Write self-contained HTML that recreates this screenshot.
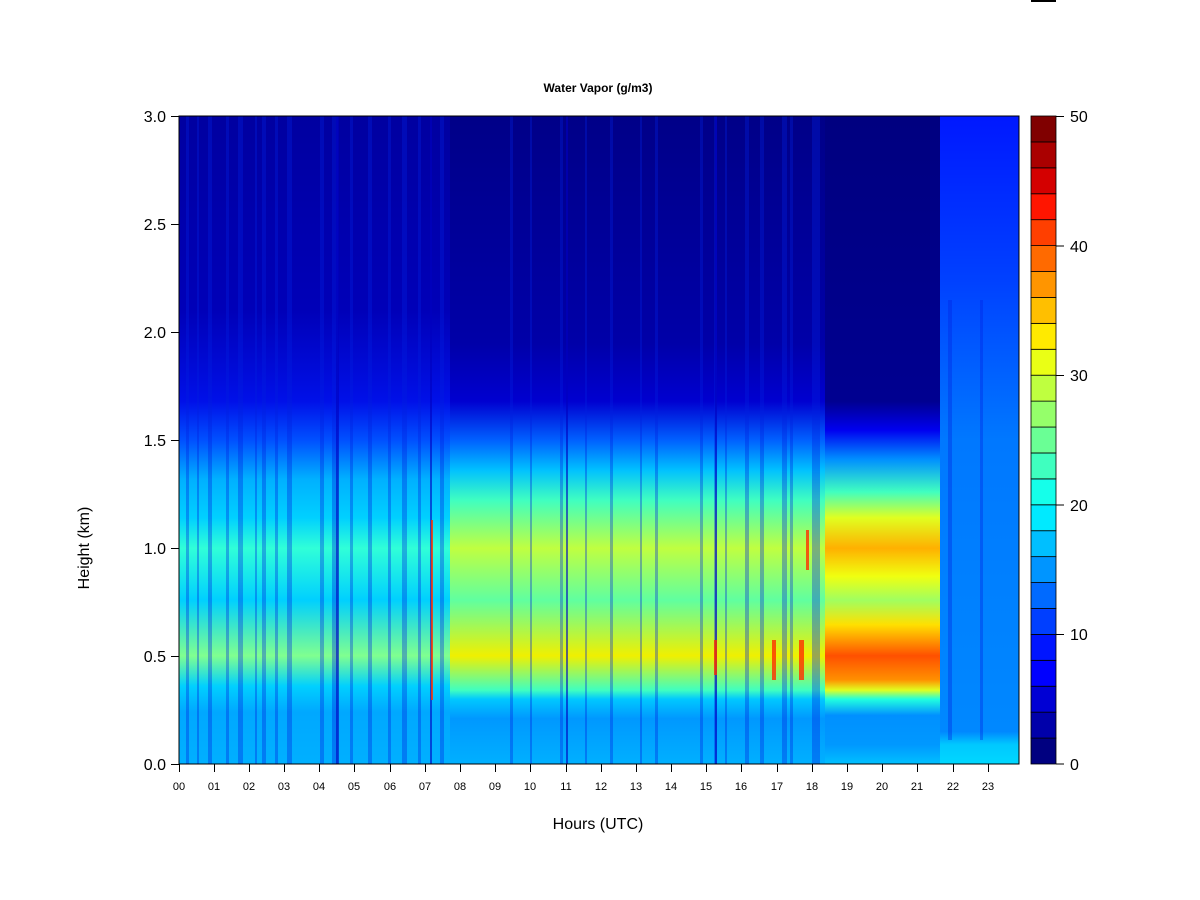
<!DOCTYPE html>
<html><head><meta charset="utf-8"><style>
html,body{margin:0;padding:0;background:#fff;}
svg{display:block;font-family:"Liberation Sans",Arial,sans-serif;}
</style></head><body>
<svg width="1200" height="900" viewBox="0 0 1200 900" xmlns="http://www.w3.org/2000/svg">
<defs>
<linearGradient id="gA" x1="0" y1="116" x2="0" y2="764" gradientUnits="userSpaceOnUse">
<stop offset="0" stop-color="#0000a0"/>
<stop offset="0.3" stop-color="#0000b8"/>
<stop offset="0.44" stop-color="#0010e8"/>
<stop offset="0.5" stop-color="#0050ff"/>
<stop offset="0.56" stop-color="#00b0ff"/>
<stop offset="0.62" stop-color="#00d0ff"/>
<stop offset="0.667" stop-color="#30ffd8"/>
<stop offset="0.747" stop-color="#00d0ff"/>
<stop offset="0.833" stop-color="#80ff90"/>
<stop offset="0.88" stop-color="#00d0ff"/>
<stop offset="0.92" stop-color="#00a8ff"/>
<stop offset="1" stop-color="#00b0ff"/>
</linearGradient>
<linearGradient id="gB" x1="0" y1="116" x2="0" y2="764" gradientUnits="userSpaceOnUse">
<stop offset="0" stop-color="#000088"/>
<stop offset="0.35" stop-color="#0000a8"/>
<stop offset="0.44" stop-color="#0000d0"/>
<stop offset="0.5" stop-color="#0060ff"/>
<stop offset="0.546" stop-color="#00c0ff"/>
<stop offset="0.593" stop-color="#40ffc0"/>
<stop offset="0.667" stop-color="#c0ff40"/>
<stop offset="0.747" stop-color="#60ffa0"/>
<stop offset="0.833" stop-color="#f0f000"/>
<stop offset="0.886" stop-color="#40ffc0"/>
<stop offset="0.9" stop-color="#00c8ff"/>
<stop offset="0.93" stop-color="#0098ff"/>
<stop offset="1" stop-color="#00b0ff"/>
</linearGradient>
<linearGradient id="gC" x1="0" y1="116" x2="0" y2="764" gradientUnits="userSpaceOnUse">
<stop offset="0" stop-color="#000080"/>
<stop offset="0.44" stop-color="#000090"/>
<stop offset="0.485" stop-color="#0000f0"/>
<stop offset="0.53" stop-color="#0090ff"/>
<stop offset="0.58" stop-color="#40ffc0"/>
<stop offset="0.62" stop-color="#e0ff20"/>
<stop offset="0.667" stop-color="#ffb000"/>
<stop offset="0.71" stop-color="#f0ff10"/>
<stop offset="0.747" stop-color="#a0ff60"/>
<stop offset="0.785" stop-color="#ffe000"/>
<stop offset="0.833" stop-color="#ff5000"/>
<stop offset="0.87" stop-color="#ff9000"/>
<stop offset="0.886" stop-color="#e0ff20"/>
<stop offset="0.9" stop-color="#20ffe0"/>
<stop offset="0.925" stop-color="#0090ff"/>
<stop offset="0.97" stop-color="#0098ff"/>
<stop offset="1" stop-color="#00c0ff"/>
</linearGradient>
<linearGradient id="gD" x1="0" y1="116" x2="0" y2="764" gradientUnits="userSpaceOnUse">
<stop offset="0" stop-color="#0018ff"/>
<stop offset="0.25" stop-color="#0040ff"/>
<stop offset="0.5" stop-color="#0078ff"/>
<stop offset="0.95" stop-color="#0088ff"/>
<stop offset="0.97" stop-color="#00c8ff"/>
<stop offset="1" stop-color="#00d8ff"/>
</linearGradient>
</defs>
<rect x="1031" y="0" width="25" height="2" fill="#000"/>
<text x="598" y="92" font-size="12" font-weight="bold" text-anchor="middle">Water Vapor (g/m3)</text>
<rect x="179" y="116" width="272" height="648" fill="url(#gA)"/>
<rect x="450" y="116" width="376" height="648" fill="url(#gB)"/>
<rect x="825" y="116" width="116" height="648" fill="url(#gC)"/>
<rect x="940" y="116" width="79" height="648" fill="url(#gD)"/>
<g fill="#0020e0" opacity="0.35">
<rect x="186" y="116" width="3" height="648"/><rect x="197" y="116" width="2" height="648"/>
<rect x="208" y="116" width="4" height="648"/><rect x="226" y="116" width="3" height="648"/>
<rect x="238" y="116" width="5" height="648"/><rect x="255" y="116" width="2" height="648"/>
<rect x="262" y="116" width="4" height="648"/><rect x="275" y="116" width="3" height="648"/>
<rect x="287" y="116" width="5" height="648"/><rect x="320" y="116" width="4" height="648"/>
<rect x="332" y="116" width="6" height="648"/><rect x="350" y="116" width="3" height="648"/>
<rect x="368" y="116" width="4" height="648"/><rect x="388" y="116" width="3" height="648"/>
<rect x="402" y="116" width="5" height="648"/><rect x="418" y="116" width="3" height="648"/>
<rect x="440" y="116" width="4" height="648"/><rect x="510" y="116" width="3" height="648"/>
<rect x="530" y="116" width="2" height="648"/><rect x="560" y="116" width="3" height="648"/>
<rect x="585" y="116" width="2" height="648"/><rect x="610" y="116" width="3" height="648"/>
<rect x="640" y="116" width="2" height="648"/><rect x="655" y="116" width="3" height="648"/>
<rect x="700" y="116" width="3" height="648"/><rect x="714" y="116" width="3" height="648"/>
<rect x="725" y="116" width="2" height="648"/><rect x="745" y="116" width="4" height="648"/>
<rect x="760" y="116" width="4" height="648"/><rect x="782" y="116" width="5" height="648"/>
<rect x="790" y="116" width="3" height="648"/><rect x="812" y="116" width="8" height="648"/>
<rect x="948" y="300" width="4" height="440"/><rect x="980" y="300" width="3" height="440"/>
</g>
<g fill="#0000c0" opacity="0.6">
<rect x="336" y="116" width="3" height="648"/><rect x="430" y="116" width="2" height="648"/>
<rect x="715" y="116" width="2" height="648"/><rect x="566" y="116" width="2" height="648"/>
</g>
<g fill="#ff3000" opacity="0.8">
<rect x="431" y="520" width="2" height="180"/>
<rect x="772" y="640" width="4" height="40"/><rect x="799" y="640" width="5" height="40"/>
<rect x="806" y="530" width="3" height="40"/><rect x="714" y="640" width="3" height="35"/>
</g>
<rect x="179" y="116" width="840" height="648" fill="none" stroke="#000" stroke-width="1"/>
<g stroke="#000" stroke-width="1">
<line x1="171" y1="116.5" x2="179" y2="116.5"/><line x1="171" y1="224.5" x2="179" y2="224.5"/>
<line x1="171" y1="332.5" x2="179" y2="332.5"/><line x1="171" y1="440.5" x2="179" y2="440.5"/>
<line x1="171" y1="548.5" x2="179" y2="548.5"/><line x1="171" y1="656.5" x2="179" y2="656.5"/>
<line x1="171" y1="764.5" x2="179" y2="764.5"/>
</g>
<g font-size="16" text-anchor="end">
<text x="166" y="122">3.0</text><text x="166" y="230">2.5</text><text x="166" y="338">2.0</text>
<text x="166" y="446">1.5</text><text x="166" y="554">1.0</text><text x="166" y="662">0.5</text>
<text x="166" y="770">0.0</text>
</g>
<text transform="translate(89,548) rotate(-90)" font-size="16" text-anchor="middle">Height (km)</text>
<g stroke="#000" stroke-width="1">
<line x1="179.5" y1="764" x2="179.5" y2="772"/><line x1="214.5" y1="764" x2="214.5" y2="772"/>
<line x1="249.5" y1="764" x2="249.5" y2="772"/><line x1="284.5" y1="764" x2="284.5" y2="772"/>
<line x1="319.5" y1="764" x2="319.5" y2="772"/><line x1="354.5" y1="764" x2="354.5" y2="772"/>
<line x1="390.5" y1="764" x2="390.5" y2="772"/><line x1="425.5" y1="764" x2="425.5" y2="772"/>
<line x1="460.5" y1="764" x2="460.5" y2="772"/><line x1="495.5" y1="764" x2="495.5" y2="772"/>
<line x1="530.5" y1="764" x2="530.5" y2="772"/><line x1="566.5" y1="764" x2="566.5" y2="772"/>
<line x1="601.5" y1="764" x2="601.5" y2="772"/><line x1="636.5" y1="764" x2="636.5" y2="772"/>
<line x1="671.5" y1="764" x2="671.5" y2="772"/><line x1="706.5" y1="764" x2="706.5" y2="772"/>
<line x1="741.5" y1="764" x2="741.5" y2="772"/><line x1="777.5" y1="764" x2="777.5" y2="772"/>
<line x1="812.5" y1="764" x2="812.5" y2="772"/><line x1="847.5" y1="764" x2="847.5" y2="772"/>
<line x1="882.5" y1="764" x2="882.5" y2="772"/><line x1="917.5" y1="764" x2="917.5" y2="772"/>
<line x1="953.5" y1="764" x2="953.5" y2="772"/><line x1="988.5" y1="764" x2="988.5" y2="772"/>
</g>
<g font-size="11" text-anchor="middle">
<text x="179" y="790">00</text><text x="214" y="790">01</text><text x="249" y="790">02</text>
<text x="284" y="790">03</text><text x="319" y="790">04</text><text x="354" y="790">05</text>
<text x="390" y="790">06</text><text x="425" y="790">07</text><text x="460" y="790">08</text>
<text x="495" y="790">09</text><text x="530" y="790">10</text><text x="566" y="790">11</text>
<text x="601" y="790">12</text><text x="636" y="790">13</text><text x="671" y="790">14</text>
<text x="706" y="790">15</text><text x="741" y="790">16</text><text x="777" y="790">17</text>
<text x="812" y="790">18</text><text x="847" y="790">19</text><text x="882" y="790">20</text>
<text x="917" y="790">21</text><text x="953" y="790">22</text><text x="988" y="790">23</text>
</g>
<text x="598" y="829" font-size="16" text-anchor="middle">Hours (UTC)</text>
<g stroke="#000" stroke-width="0.8">
<rect x="1031" y="738.08" width="25" height="25.92" fill="#000080"/>
<rect x="1031" y="712.16" width="25" height="25.92" fill="#0000aa"/>
<rect x="1031" y="686.24" width="25" height="25.92" fill="#0000d4"/>
<rect x="1031" y="660.32" width="25" height="25.92" fill="#0000ff"/>
<rect x="1031" y="634.4" width="25" height="25.92" fill="#0015ff"/>
<rect x="1031" y="608.48" width="25" height="25.92" fill="#003fff"/>
<rect x="1031" y="582.56" width="25" height="25.92" fill="#006aff"/>
<rect x="1031" y="556.64" width="25" height="25.92" fill="#0095ff"/>
<rect x="1031" y="530.72" width="25" height="25.92" fill="#00bfff"/>
<rect x="1031" y="504.8" width="25" height="25.92" fill="#00eaff"/>
<rect x="1031" y="478.88" width="25" height="25.92" fill="#15ffea"/>
<rect x="1031" y="452.96" width="25" height="25.92" fill="#3fffbf"/>
<rect x="1031" y="427.04" width="25" height="25.92" fill="#6aff95"/>
<rect x="1031" y="401.12" width="25" height="25.92" fill="#95ff6a"/>
<rect x="1031" y="375.2" width="25" height="25.92" fill="#bfff3f"/>
<rect x="1031" y="349.28" width="25" height="25.92" fill="#eaff15"/>
<rect x="1031" y="323.36" width="25" height="25.92" fill="#ffea00"/>
<rect x="1031" y="297.44" width="25" height="25.92" fill="#ffbf00"/>
<rect x="1031" y="271.52" width="25" height="25.92" fill="#ff9500"/>
<rect x="1031" y="245.6" width="25" height="25.92" fill="#ff6a00"/>
<rect x="1031" y="219.68" width="25" height="25.92" fill="#ff3f00"/>
<rect x="1031" y="193.76" width="25" height="25.92" fill="#ff1500"/>
<rect x="1031" y="167.84" width="25" height="25.92" fill="#d40000"/>
<rect x="1031" y="141.92" width="25" height="25.92" fill="#aa0000"/>
<rect x="1031" y="116" width="25" height="25.92" fill="#800000"/>
</g>
<g stroke="#000" stroke-width="1">
<line x1="1056" y1="116.5" x2="1064" y2="116.5"/><line x1="1056" y1="246" x2="1064" y2="246"/>
<line x1="1056" y1="375.5" x2="1064" y2="375.5"/><line x1="1056" y1="505" x2="1064" y2="505"/>
<line x1="1056" y1="634.5" x2="1064" y2="634.5"/><line x1="1056" y1="764" x2="1064" y2="764"/>
</g>
<g font-size="16">
<text x="1070" y="122">50</text><text x="1070" y="252">40</text><text x="1070" y="381">30</text>
<text x="1070" y="511">20</text><text x="1070" y="640">10</text><text x="1070" y="770">0</text>
</g>
</svg>
</body></html>
